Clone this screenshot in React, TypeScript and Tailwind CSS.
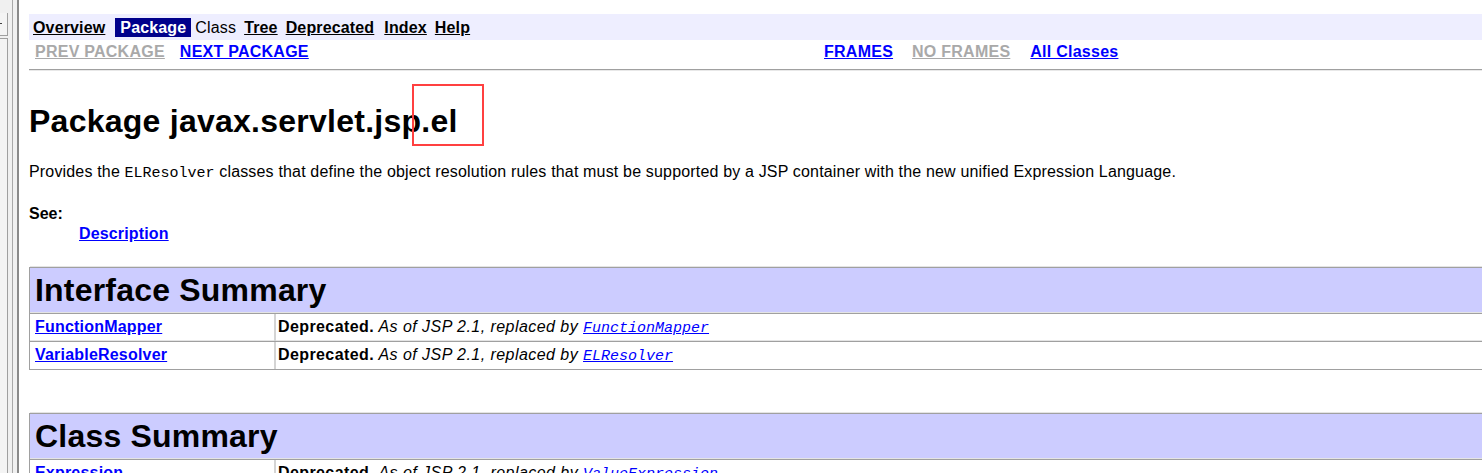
const SANS = { fontFamily: '"Liberation Sans", Arial, sans-serif' };
const MONO = { fontFamily: '"Liberation Mono", monospace' };

const INTERFACES = [
  { name: 'FunctionMapper', repl: 'FunctionMapper' },
  { name: 'VariableResolver', repl: 'ELResolver' },
];

const CLASSES = [{ name: 'Expression', repl: 'ValueExpression' }];

function FrameStrip() {
  return (
    <div className="flex h-[473px] w-[19px] shrink-0 bg-[#f0f0f0]">
      <div className="w-[8px] flex flex-col">
        <div className="relative mt-[13px] h-[23px] border-r border-b border-[#a0a0a0] bg-[#f4f4f4]">
          <div className="absolute left-0 top-[10px] h-px w-[2px] bg-[#404040]" />
        </div>
        <div className="mt-[2px] flex-1 border-r border-t border-[#a0a0a0] bg-[#f4f4f4]" />
      </div>
      <div className="w-[4px]" />
      <div className="w-px bg-[#a8a8a8]" />
      <div className="w-[4px]" />
      <div className="w-[2px] bg-[#8a8a8a]" />
    </div>
  );
}

function NavLink({ children }: { children: React.ReactNode }) {
  return <a className="font-bold text-black underline">{children}</a>;
}

function SummaryTable({ title, rows }: { title: string; rows: { name: string; repl: string }[] }) {
  return (
    <div className="border-l border-[#a0a0a0]">
      <div className="h-[46px] border-t border-[#a0a0a0] bg-[#ccccff] pl-[5px] pt-[4px] shadow-[0_-1px_0_#e4e4e4]">
        <h2 className="text-[32px] leading-[37px] font-bold text-black tracking-[0.2px]">{title}</h2>
      </div>
      {rows.map((r) => (
        <div key={r.name} className="grid h-[28px] grid-cols-[244px_1fr] border-t border-[#a0a0a0] shadow-[0_-1px_0_#e4e4e4]">
          <div className="pl-[5px] pt-[4px] leading-[18px] tracking-[0.2px]">
            <a className="font-bold text-[#0000ff] underline">{r.name}</a>
          </div>
          <div className="border-l-2 border-[#d4d4d4] pl-[2px] pt-[4px] leading-[18px] whitespace-nowrap">
            <b className="tracking-[0.4px]">Deprecated.</b>{' '}
            <i className="tracking-[0.45px]">As of JSP 2.1, replaced by </i>
            <a className="text-[15px] italic text-[#0000ff] underline" style={MONO}>
              {r.repl}
            </a>
          </div>
        </div>
      ))}
      <div className="h-px bg-[#a0a0a0]" />
    </div>
  );
}

export default function App() {
  return (
    <div className="relative flex h-[473px] w-[1482px] overflow-hidden bg-white text-[16px] text-black" style={SANS}>
      <FrameStrip />
      <div className="min-w-0 flex-1 pl-[10px]">
        {/* Top nav */}
        <div className="mt-[14px] flex h-[26px] items-center bg-[#eeeeff] pl-[4px] leading-[19px] whitespace-nowrap tracking-[0.15px]">
          <NavLink>Overview</NavLink>
          <span className="ml-[10px] bg-[#00008b] px-[5px] font-bold text-white">Package</span>
          <span className="ml-[4px]">Class</span>
          <span className="ml-[8px]"><NavLink>Tree</NavLink></span>
          <span className="ml-[8px]"><NavLink>Deprecated</NavLink></span>
          <span className="ml-[10px]"><NavLink>Index</NavLink></span>
          <span className="ml-[8px]"><NavLink>Help</NavLink></span>
        </div>
        <div className="mt-[2px] flex h-[19px] font-bold leading-[19px] whitespace-nowrap tracking-[0.25px]">
          <div className="flex w-[789px] pl-[6px]">
            <a className="text-[#a9a9a9] underline">PREV PACKAGE</a>
            <a className="ml-[15px] text-[#0000ff] underline">NEXT PACKAGE</a>
          </div>
          <div className="flex pl-[6px]">
            <a className="text-[#0000ff] underline">FRAMES</a>
            <a className="ml-[19px] text-[#a9a9a9] underline">NO FRAMES</a>
            <a className="ml-[20px] text-[#0000ff] underline">All Classes</a>
          </div>
        </div>
        <div className="mt-[8px] h-[2px] border-t border-[#a0a0a0] bg-[#e8e8e8]" />

        <h1 className="mt-[32px] text-[32px] leading-[37px] font-bold tracking-[0.25px]">Package javax.servlet.jsp.el</h1>

        <p className="mt-[23px] leading-[18px] whitespace-nowrap">
          <span className="tracking-[0.17px]">Provides the </span>
          <code className="text-[15px]" style={MONO}>ELResolver</code>
          <span className="tracking-[0.17px]">
            {' '}classes that define the object resolution rules that must be supported by a JSP container with the
            new unified Expression Language.
          </span>
        </p>

        <div className="mt-[21px] leading-[20px] font-bold">See:</div>
        <div className="pl-[50px] leading-[20px] tracking-[0.15px]">
          <a className="font-bold text-[#0000ff] underline">Description</a>
        </div>

        <div className="mt-[23px]">
          <SummaryTable title="Interface Summary" rows={INTERFACES} />
        </div>
        <div className="mt-[43px]">
          <SummaryTable title="Class Summary" rows={CLASSES} />
        </div>
      </div>

      {/* annotation box */}
      <div className="absolute left-[412px] top-[84px] h-[62px] w-[72px] border-2 border-[#ff4040]" />
    </div>
  );
}
